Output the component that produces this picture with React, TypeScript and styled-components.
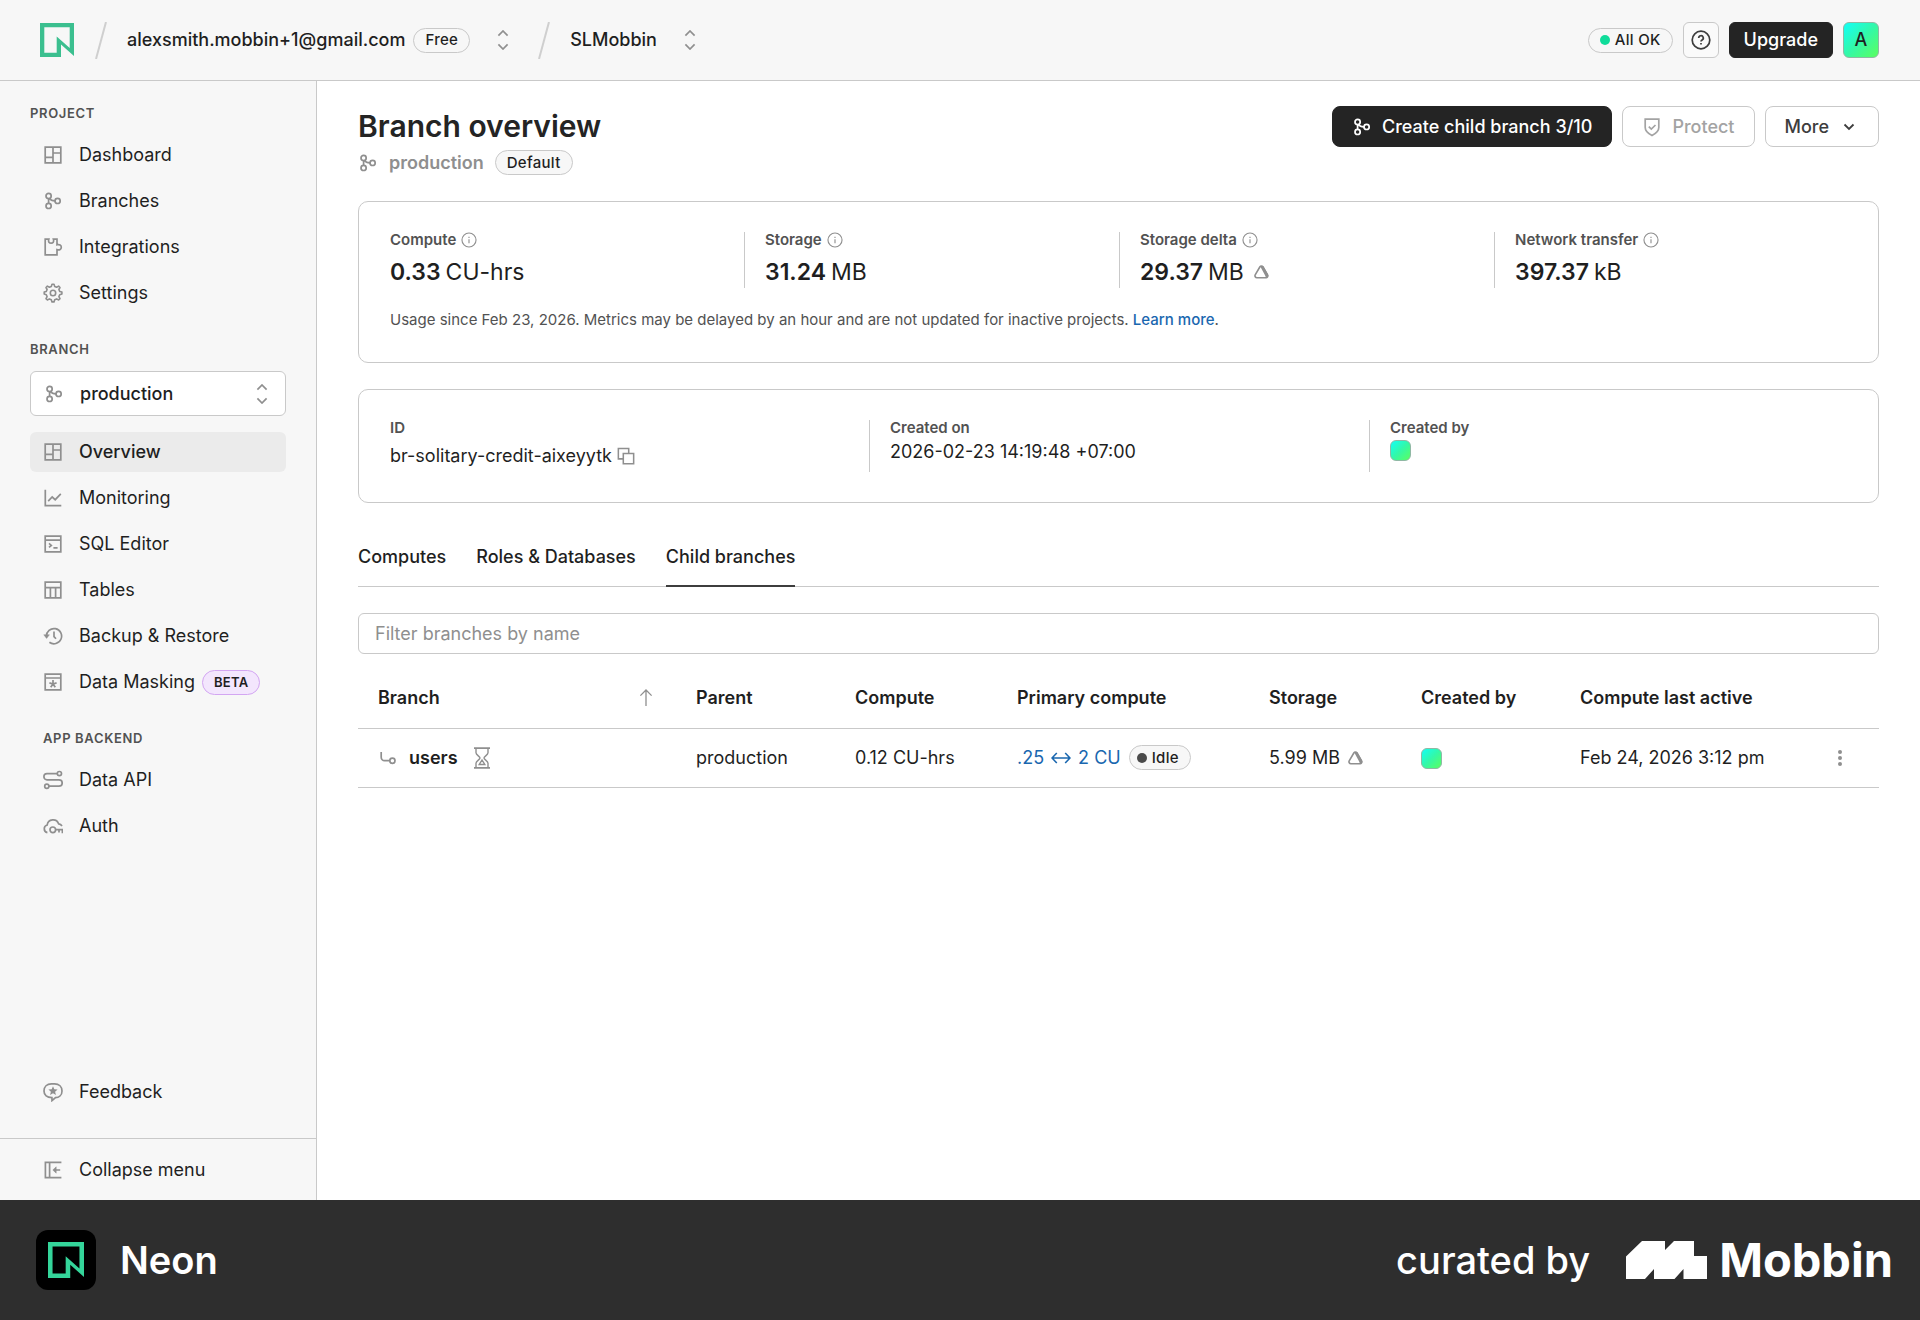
import React from "react";
import styled, { createGlobalStyle, css } from "styled-components";

const c = {
  ink: "#1f1f1f",
  strong: "#242424",
  sub: "#525252",
  muted: "#8f8f8f",
  line: "#c9c9c9",
  panel: "#f7f7f7",
  active: "#ebebeb",
  link: "#1a67af",
};

const Global = createGlobalStyle`
  *, *::before, *::after { box-sizing: border-box; }
  body { margin: 0; background: #fff; }
  body, button, input, select {
    font-family: Inter, "Liberation Sans", sans-serif;
    font-size: 18px;
    line-height: 24px;
    color: ${c.ink};
  }
  button, select { cursor: pointer; }
  strong { font-weight: 600; }
  h1, h2, p, dl, dt, dd { margin: 0; padding: 0; }
`;

/* ---------- icons ---------- */

type IconProps = { size?: number; width?: number; children?: React.ReactNode };

const Svg = ({ size = 20, width = 1.7, children }: IconProps) => (
  <svg
    width={size}
    height={size}
    viewBox="0 0 20 20"
    fill="none"
    stroke="currentColor"
    strokeWidth={width}
    aria-hidden="true"
  >
    {children}
  </svg>
);

const DashboardIcon = () => (
  <Svg>
    <path d="M2.2 2.2h15.6v15.6H2.2zM10 2.2v15.6M10 8h7.8M2.2 12.4H10" />
  </Svg>
);
const BranchIcon = () => (
  <Svg>
    <circle cx="5.6" cy="4.9" r="2.6" />
    <circle cx="5.6" cy="14.9" r="2.6" />
    <circle cx="14.6" cy="9.9" r="2.6" />
    <path d="M5.6 7.5v4.8M6.6 7.4c.9 1.8 2.6 2.5 5.4 2.5" />
  </Svg>
);
const PuzzleIcon = () => (
  <Svg>
    <path d="M2.2 2.2h3.6c-.9 2.6.5 4 2.300 4s3.200-1.400 2.300-4h3.600v5.600c2.600-.8 4.300.4 4.300 2.400s-1.700 3.200-4.300 2.400v5.200H2.200z" />
  </Svg>
);
const GearIcon = () => (
  <Svg width={1.6}>
    <circle cx="10" cy="10" r="2.7" />
    <path
      strokeLinejoin="round"
      d="M8.300 3.400 9 1.200h2l.7 2.200 1.900.8 2-1.100 1.400 1.400-1.100 2 .8 1.900 2.200.6v2l-2.200.7-.8 1.900 1.100 2-1.400 1.400-2-1.100-1.900.8-.7 2.200H9l-.7-2.200-1.900-.8-2 1.100L3 15.600l1.100-2-.8-1.900L1.200 11V9l2.100-.6.8-1.900-1.100-2 1.400-1.400 2 1.100z"
    />
  </Svg>
);
const ChartIcon = () => (
  <Svg>
    <path d="M2.300 1.700v16h16M5.200 13.200l4-4.200 3 2.700 5.600-5.800" />
  </Svg>
);
const SqlIcon = () => (
  <Svg>
    <path d="M2.200 2.200h15.600v15.600H2.200zM2.200 6.200h15.600M6 9.400l2.300 2L6 13.400M10.400 13.800h4.200" />
  </Svg>
);
const TablesIcon = () => (
  <Svg>
    <path d="M2.200 2.200h15.600v15.600H2.200zM2.200 7.600h15.600M7.400 7.600v10.200M12.600 7.600v10.200" />
  </Svg>
);
const RestoreIcon = () => (
  <Svg>
    <path d="M3.400 10.400A7.600 7.600 0 1 1 6.400 16.200M11 5.400v5.200l2 2.200" />
    <path d="M.8 8.800h5.600l-2.800 3.600z" fill="currentColor" strokeWidth="0.5" />
  </Svg>
);
const MaskIcon = () => (
  <Svg>
    <path d="M2.200 2.200h15.600v15.600H2.200zM2.200 6h15.600" />
    <path d="M10 8v4M10 12l-3.600-1.100M10 12l3.600-1.100M10 12l-2.300 3.200M10 12l2.300 3.200" />
  </Svg>
);
const ApiIcon = () => (
  <Svg>
    <circle cx="16.400" cy="3.600" r="2.100" />
    <circle cx="3.800" cy="16.200" r="2.100" />
    <path d="M14.300 3.600H4A3.100 3.100 0 0 0 4 9.800h12a3.100 3.100 0 0 1 0 6.400H5.900" />
  </Svg>
);
const AuthIcon = () => (
  <Svg>
    <path d="M4.400 16.600A3.900 3.900 0 0 1 4.200 9a5.900 5.900 0 0 1 11.400-1.200A4.600 4.600 0 0 1 19 10" />
    <circle cx="9.800" cy="13.800" r="2.800" />
    <path d="M12.600 13.600h6.800v3.600M16 13.600v3" />
  </Svg>
);
const FeedbackIcon = () => (
  <Svg>
    <path d="M8.900 15.600C4 15.600 1 13.400 1 9s3-7.100 7.400-7.100h3.200C16 1.900 19 4.600 19 9s-3.200 6.600-6.500 6.600L9 18.600z" />
    <path
      d="M10 4.200l1.300 3 3.300.3-2.500 2.200.8 3.200L10 11.200l-2.900 1.700.8-3.200-2.500-2.200 3.300-.3z"
      fill="currentColor"
      stroke="none"
    />
  </Svg>
);
const CollapseIcon = () => (
  <Svg>
    <path d="M18.400 2.400H2.400v15.200h16M6.600 2.400v15.200M17.200 10H11" />
    <path d="M13.200 6.800L9.800 10l3.400 3.200z" fill="currentColor" strokeWidth="0.5" />
  </Svg>
);
const ChevronsIcon = () => (
  <Svg width={1.7}>
    <path d="M5.400 5.600 10 1l4.600 4.600M5.400 14.400 10 19l4.600-4.600" />
  </Svg>
);
const ChevronDownIcon = () => (
  <Svg width={1.8}>
    <path d="M5.500 7.500 10 12l4.500-4.500" />
  </Svg>
);
const HelpIcon = () => (
  <Svg width={1.7}>
    <circle cx="10" cy="10" r="8.800" />
    <path d="M7.700 8a2.300 2.300 0 1 1 3.400 2c-.8.500-1.100.8-1.100 1.500M10 12.900v1.500" />
  </Svg>
);
const ShieldIcon = () => (
  <Svg width={1.7}>
    <path d="M3.200 2.200h13.600v8.400c0 4-2.800 6-6.800 8-4-2-6.800-4-6.800-8z" />
    <path d="M6.800 9.600l2.500 2.400 4.200-4" />
  </Svg>
);
const InfoIcon = () => (
  <Svg size={16} width={1.4}>
    <circle cx="10" cy="10" r="8.800" />
    <path d="M10 9v5.200M10 5.800v1.600" />
  </Svg>
);
const DeltaIcon = () => (
  <svg width="15" height="14" viewBox="0 0 15 14" fill="none" stroke="currentColor" aria-hidden="true">
    <path
      d="M5.800 2 1.200 9.900a1.900 1.900 0 0 0 1.700 2.800h9a1.900 1.900 0 0 0 1.700-2.800L9 2a1.900 1.900 0 0 0-3.200 0z"
      strokeWidth="1.600"
    />
    <path d="M8 1.600 12.600 10c.4.900 0 1.600-.8 2" strokeWidth="3" />
  </svg>
);
const CopyIcon = () => (
  <Svg size={18} width={1.7}>
    <path d="M7 7.200h11.500v11.300H7zM7 13.200H1.500V1.700H13v5.500" />
  </Svg>
);
const SortIcon = () => (
  <Svg width={1.3}>
    <path d="M10 18V2.200M4.400 7.600 10 2l5.600 5.600" />
  </Svg>
);
const ChildIcon = () => (
  <Svg>
    <path d="M3.200 4v5.200a3.400 3.400 0 0 0 3.400 3.400H12" />
    <circle cx="14.400" cy="12.800" r="2.600" />
  </Svg>
);
const HourglassIcon = () => (
  <svg width="16" height="22" viewBox="0 0 16 22" fill="none" stroke="currentColor" strokeWidth="1.400" aria-hidden="true">
    <path d="M0 1.200h16M0 20.800h16" strokeWidth="1.800" />
    <path d="M2 1.200v4.600C2 8 6 9.500 6 11s-4 3-4 5.200v4.600M14 1.200v4.600C14 8 10 9.500 10 11s4 3 4 5.200v4.600" />
    <path d="M8 13l-2.800 4.500h5.600z" />
  </svg>
);
const ArrowsIcon = () => (
  <svg width="20" height="12" viewBox="0 0 20 12" fill="none" stroke="currentColor" strokeWidth="1.600" aria-hidden="true">
    <path d="M1 6h18M5.800 1 1 6l4.800 5M14.200 1 19 6l-4.800 5" />
  </svg>
);
const KebabIcon = () => (
  <svg width="4" height="18" viewBox="0 0 4 18" fill="currentColor" aria-hidden="true">
    <circle cx="2" cy="3" r="2" />
    <circle cx="2" cy="9" r="2" />
    <circle cx="2" cy="15" r="2" />
  </svg>
);
const NeonMark = ({ size, color }: { size: number; color: string }) => (
  <svg width={size} height={size} viewBox="0 0 34 34" fill={color} fillRule="evenodd" aria-hidden="true">
    <path d="M0 0h34v33L21 21.500V34H0zM4.300 4.300v25.400H16.700V13.500L29.700 25V4.300z" />
  </svg>
);
const Slash = () => (
  <svg width="12" height="37" viewBox="0 0 12 37" stroke="#cfcfcf" strokeWidth="2" aria-hidden="true">
    <path d="M1 37 11 0" />
  </svg>
);
const MobbinMark = () => (
  <svg width="81" height="38" viewBox="0 0 81 38" fill="#fff" aria-hidden="true">
    <path d="M0 38V15.500L16 0h23v9l9-9h20v15h13v23H57.500v-10L48.500 38H28v-10L19 38z" />
  </svg>
);

/* ---------- layout ---------- */

const Page = styled.div`
  display: flex;
  flex-direction: column;
  min-height: 100vh;
`;

const TopBar = styled.header`
  display: flex;
  align-items: center;
  justify-content: space-between;
  height: 81px;
  padding: 0 41px 0 40px;
  background: ${c.panel};
  border-bottom: 1px solid ${c.line};
`;

const Crumbs = styled.nav`
  display: flex;
  align-items: center;
`;

const Home = styled.a`
  display: flex;
  margin-right: 21px;
`;

const CrumbButton = styled.button<{ $end?: number }>`
  display: flex;
  align-items: center;
  gap: 8px;
  margin: 0 ${(p) => p.$end ?? 0}px 0 20px;
  padding: 0;
  border: 0;
  background: none;
  font-weight: 500;
`;

const Chevrons = styled.span`
  display: flex;
  margin-left: 15px;
  color: ${c.muted};
`;

const Pill = styled.span<{ $beta?: boolean; $dotted?: boolean }>`
  display: inline-flex;
  align-items: center;
  gap: 5px;
  height: 25px;
  padding: 0 11px 0 ${(p) => (p.$dotted ? 7 : 11)}px;
  border: 1px solid ${c.line};
  border-radius: 13px;
  background: #f7f7f7;
  font-size: 15px;
  line-height: 20px;
  font-weight: 500;
  letter-spacing: 0.02em;
  color: ${c.ink};
  ${(p) =>
    p.$beta &&
    css`
      border-color: #d3a6f2;
      background: #f3e6fd;
      font-size: 13px;
      font-weight: 600;
    `}
`;

const Dot = styled.span<{ $color: string }>`
  width: 10px;
  height: 10px;
  border-radius: 50%;
  background: ${(p) => p.$color};
`;

const TopActions = styled.div`
  display: flex;
  align-items: center;
  gap: 10px;
`;

const Button = styled.button<{ $kind?: "dark" | "plain"; $small?: boolean }>`
  display: flex;
  align-items: center;
  gap: 10px;
  height: ${(p) => (p.$small ? 36 : 41)}px;
  padding: 0 ${(p) => (p.$small ? 14 : 19)}px;
  border: 1px solid ${(p) => (p.$kind === "dark" ? c.strong : c.line)};
  border-radius: ${(p) => (p.$small ? 6 : 8)}px;
  background: ${(p) => (p.$kind === "dark" ? c.strong : "#fff")};
  color: ${(p) => (p.$kind === "dark" ? "#fff" : "#3d3d3d")};
  font-weight: 500;
  white-space: nowrap;
  &:disabled {
    color: #a3a3a3;
    cursor: default;
  }
`;

const HelpButton = styled.button`
  display: flex;
  align-items: center;
  justify-content: center;
  width: 36px;
  height: 36px;
  padding: 0;
  border: 1px solid ${c.line};
  border-radius: 6px;
  background: #fafafa;
  color: #3d3d3d;
`;

const Avatar = styled.span<{ $size: number }>`
  display: inline-flex;
  align-items: center;
  justify-content: center;
  width: ${(p) => p.$size}px;
  height: ${(p) => p.$size}px;
  border: 1px solid #8fb8a4;
  border-radius: 6px;
  background: linear-gradient(135deg, #12fff7 0%, #33f8a8 50%, #5bff5f 100%);
  font-weight: 500;
  vertical-align: middle;
`;

const Body = styled.div`
  display: grid;
  grid-template-columns: 317px minmax(0, 1fr);
  flex: 1;
`;

const Sidebar = styled.aside`
  display: flex;
  flex-direction: column;
  background: ${c.panel};
  border-right: 1px solid ${c.line};
`;

const Section = styled.section`
  display: flex;
  flex-direction: column;
  gap: 6px;
  padding: 0 30px;
`;

const SectionTitle = styled.h2<{ $top: number; $inset?: boolean }>`
  margin: ${(p) => p.$top}px 0 8px ${(p) => (p.$inset ? 13 : 0)}px;
  font-size: 13px;
  line-height: 16px;
  font-weight: 600;
  letter-spacing: 0.05em;
  color: ${c.sub};
`;

const NavItem = styled.a<{ $active?: boolean }>`
  display: flex;
  align-items: center;
  height: 40px;
  padding-left: 13px;
  border-radius: 6px;
  background: ${(p) => (p.$active ? c.active : "none")};
  font-weight: ${(p) => (p.$active ? 500 : 400)};
  color: ${c.ink};
  text-decoration: none;
  white-space: nowrap;
  > svg {
    margin-right: 16px;
    color: ${c.muted};
  }
  > ${Pill} {
    margin-left: 7px;
  }
`;

const BranchSelect = styled.label`
  display: flex;
  align-items: center;
  height: 45px;
  margin-bottom: 10px;
  padding: 0 13px;
  border: 1px solid ${c.line};
  border-radius: 6px;
  background: #fff;
  color: ${c.muted};
  select {
    flex: 1;
    margin-left: 16px;
    padding: 0;
    border: 0;
    appearance: none;
    background: none;
    font-weight: 500;
  }
`;

const SidebarFoot = styled.div`
  margin-top: auto;
`;

const Collapse = styled.button`
  display: flex;
  align-items: center;
  gap: 16px;
  width: 100%;
  height: 62px;
  margin-top: 26px;
  padding: 0 43px;
  border: 0;
  border-top: 1px solid ${c.line};
  background: none;
  svg {
    color: ${c.muted};
  }
`;

const Main = styled.main`
  padding: 25px 41px;
`;

const Heading = styled.div`
  display: flex;
  justify-content: space-between;
  align-items: flex-start;
  margin-bottom: 26px;
`;

const Title = styled.h1`
  font-size: 30px;
  line-height: 41px;
  font-weight: 600;
  color: ${c.strong};
`;

const Subtitle = styled.div`
  display: flex;
  align-items: center;
  gap: 11px;
  margin-top: 3px;
  color: ${c.muted};
  font-weight: 600;
`;

const Card = styled.section`
  margin-bottom: 26px;
  padding: 30px 31px;
  border: 1px solid ${c.line};
  border-radius: 10px;
`;

const Stats = styled.dl`
  display: flex;
  gap: 22px;
`;

const Stat = styled.div`
  box-sizing: content-box;
  flex: 1 1 0;
  min-width: 0;
  & + & {
    padding-left: 20px;
    border-left: 1px solid ${c.line};
  }
`;

const StatLabel = styled.dt`
  display: flex;
  align-items: center;
  gap: 5px;
  font-size: 15px;
  line-height: 16px;
  font-weight: 600;
  color: ${c.sub};
  svg {
    color: ${c.muted};
  }
`;

const Metric = styled.dd`
  display: flex;
  align-items: center;
  gap: 5px;
  margin-top: 8px;
  font-size: 23px;
  line-height: 32px;
  svg {
    margin-left: 5px;
    color: ${c.muted};
  }
`;

const Detail = styled.dd`
  display: flex;
  align-items: center;
  gap: 5px;
  margin-top: 4px;
`;

const CopyButton = styled.button`
  display: flex;
  align-items: center;
  height: 32px;
  padding: 0;
  border: 0;
  background: none;
  color: ${c.muted};
`;

const Note = styled.p`
  margin-top: 20px;
  font-size: 15px;
  line-height: 24px;
  color: ${c.sub};
`;

const Link = styled.a`
  color: ${c.link};
  font-weight: 500;
  text-decoration: none;
`;

const Tabs = styled.div`
  display: flex;
  gap: 30px;
  margin-top: 42px;
  border-bottom: 1px solid ${c.line};
`;

const Tab = styled.button<{ $active?: boolean }>`
  margin-bottom: -1px;
  padding: 0 0 16px;
  border: 0;
  border-bottom: 2px solid ${(p) => (p.$active ? "#3d3d3d" : "transparent")};
  background: none;
  font-weight: 500;
`;

const Filter = styled.input`
  display: block;
  width: 100%;
  height: 41px;
  margin: 26px 0 15px;
  padding: 0 16px;
  border: 1px solid ${c.line};
  border-radius: 6px;
  outline: 0;
  &::placeholder {
    color: ${c.muted};
    opacity: 1;
  }
`;

const Table = styled.table`
  width: 100%;
  table-layout: fixed;
  border-collapse: collapse;
  text-align: left;
  white-space: nowrap;
  th,
  td {
    height: 59px;
    padding: 0 0 0 20px;
    border-bottom: 1px solid ${c.line};
  }
  th {
    font-weight: 600;
  }
`;

const CellRow = styled.div`
  display: flex;
  align-items: center;
  gap: 8px;
  > svg {
    color: ${c.muted};
  }
`;

const SortHead = styled(CellRow)`
  justify-content: space-between;
  padding-right: 20px;
`;

const BranchName = styled.strong`
  margin: 0 8px 0 3px;
`;

const ComputeLink = styled.a`
  display: flex;
  align-items: center;
  gap: 7px;
  color: ${c.link};
  text-decoration: none;
`;

const RowMenu = styled.button`
  display: block;
  padding: 0;
  border: 0;
  background: none;
  color: ${c.muted};
  svg {
    display: block;
  }
`;

const Banner = styled.footer`
  display: flex;
  align-items: center;
  justify-content: space-between;
  height: 120px;
  padding: 0 27px 0 36px;
  background: #2e2e2e;
  color: #fff;
`;

const Brand = styled.div`
  display: flex;
  align-items: center;
  gap: 24px;
  font-size: 38px;
  line-height: 48px;
  font-weight: 600;
`;

const AppTile = styled.span`
  display: flex;
  align-items: center;
  justify-content: center;
  width: 60px;
  height: 60px;
  border-radius: 12px;
  background: #000;
`;

const Curated = styled(Brand)`
  gap: 36px;
  font-weight: 500;
`;

const Wordmark = styled.span`
  display: flex;
  align-items: center;
  gap: 12px;
  font-size: 47px;
  font-weight: 700;
`;

/* ---------- data ---------- */

type Nav = { label: string; icon: React.ReactNode; active?: boolean; beta?: boolean };

const projectNav: Nav[] = [
  { label: "Dashboard", icon: <DashboardIcon /> },
  { label: "Branches", icon: <BranchIcon /> },
  { label: "Integrations", icon: <PuzzleIcon /> },
  { label: "Settings", icon: <GearIcon /> },
];
const branchNav: Nav[] = [
  { label: "Overview", icon: <DashboardIcon />, active: true },
  { label: "Monitoring", icon: <ChartIcon /> },
  { label: "SQL Editor", icon: <SqlIcon /> },
  { label: "Tables", icon: <TablesIcon /> },
  { label: "Backup & Restore", icon: <RestoreIcon /> },
  { label: "Data Masking", icon: <MaskIcon />, beta: true },
];
const backendNav: Nav[] = [
  { label: "Data API", icon: <ApiIcon /> },
  { label: "Auth", icon: <AuthIcon /> },
];
const metrics = [
  { label: "Compute", value: "0.33", unit: "CU-hrs" },
  { label: "Storage", value: "31.24", unit: "MB" },
  { label: "Storage delta", value: "29.37", unit: "MB", delta: true },
  { label: "Network transfer", value: "397.37", unit: "kB" },
];
const columnWidths = [318, 159, 162, 252, 152, 159, undefined, 61];

const NavList = ({ items }: { items: Nav[] }) => (
  <>
    {items.map((it) => (
      <NavItem key={it.label} href="#" $active={it.active}>
        {it.icon}
        {it.label}
        {it.beta && <Pill $beta>BETA</Pill>}
      </NavItem>
    ))}
  </>
);

export default function App() {
  return (
    <Page>
      <Global />
      <TopBar>
        <Crumbs aria-label="Breadcrumb">
          <Home href="#" aria-label="Neon home">
            <NeonMark size={34} color="#3bbf8f" />
          </Home>
          <Slash />
          <CrumbButton $end={25}>
            alexsmith.mobbin+1@gmail.com
            <Pill>Free</Pill>
            <Chevrons>
              <ChevronsIcon />
            </Chevrons>
          </CrumbButton>
          <Slash />
          <CrumbButton>
            SLMobbin
            <Chevrons>
              <ChevronsIcon />
            </Chevrons>
          </CrumbButton>
        </Crumbs>
        <TopActions>
          <Pill>
            <Dot $color="#0fdc9a" />
            All OK
          </Pill>
          <HelpButton aria-label="Help">
            <HelpIcon />
          </HelpButton>
          <Button $kind="dark" $small>
            Upgrade
          </Button>
          <Avatar $size={36}>A</Avatar>
        </TopActions>
      </TopBar>

      <Body>
        <Sidebar>
          <Section>
            <SectionTitle $top={24}>PROJECT</SectionTitle>
            <NavList items={projectNav} />
          </Section>
          <Section>
            <SectionTitle $top={28}>BRANCH</SectionTitle>
            <BranchSelect>
              <BranchIcon />
              <select aria-label="Branch" defaultValue="production">
                <option value="production">production</option>
                <option value="users">users</option>
              </select>
              <ChevronsIcon />
            </BranchSelect>
            <NavList items={branchNav} />
          </Section>
          <Section>
            <SectionTitle $top={28} $inset>
              APP BACKEND
            </SectionTitle>
            <NavList items={backendNav} />
          </Section>
          <SidebarFoot>
            <Section>
              <NavItem href="#">
                <FeedbackIcon />
                Feedback
              </NavItem>
            </Section>
            <Collapse>
              <CollapseIcon />
              Collapse menu
            </Collapse>
          </SidebarFoot>
        </Sidebar>

        <Main>
          <Heading>
            <div>
              <Title>Branch overview</Title>
              <Subtitle>
                <BranchIcon />
                production
                <Pill>Default</Pill>
              </Subtitle>
            </div>
            <TopActions>
              <Button $kind="dark">
                <BranchIcon />
                Create child branch 3/10
              </Button>
              <Button disabled>
                <ShieldIcon />
                Protect
              </Button>
              <Button>
                More
                <ChevronDownIcon />
              </Button>
            </TopActions>
          </Heading>

          <Card>
            <Stats>
              {metrics.map((m) => (
                <Stat key={m.label}>
                  <StatLabel>
                    {m.label}
                    <InfoIcon />
                  </StatLabel>
                  <Metric>
                    <strong>{m.value}</strong>
                    {m.unit}
                    {m.delta && <DeltaIcon />}
                  </Metric>
                </Stat>
              ))}
            </Stats>
            <Note>
              Usage since Feb 23, 2026. Metrics may be delayed by an hour and are not updated for inactive
              projects. <Link href="#">Learn more</Link>.
            </Note>
          </Card>

          <Card>
            <Stats>
              <Stat>
                <StatLabel>ID</StatLabel>
                <Detail>
                  br-solitary-credit-aixeyytk
                  <CopyButton aria-label="Copy branch ID">
                    <CopyIcon />
                  </CopyButton>
                </Detail>
              </Stat>
              <Stat>
                <StatLabel>Created on</StatLabel>
                <Detail>2026-02-23 14:19:48 +07:00</Detail>
              </Stat>
              <Stat>
                <StatLabel>Created by</StatLabel>
                <Detail>
                  <Avatar $size={21} />
                </Detail>
              </Stat>
            </Stats>
          </Card>

          <Tabs role="tablist">
            <Tab role="tab">Computes</Tab>
            <Tab role="tab">Roles &amp; Databases</Tab>
            <Tab role="tab" aria-selected $active>
              Child branches
            </Tab>
          </Tabs>

          <Filter type="text" aria-label="Filter branches by name" placeholder="Filter branches by name" />

          <Table>
            <colgroup>
              {columnWidths.map((w, i) => (
                <col key={i} width={w} />
              ))}
            </colgroup>
            <thead>
              <tr>
                <th scope="col">
                  <SortHead>
                    Branch
                    <SortIcon />
                  </SortHead>
                </th>
                <th scope="col">Parent</th>
                <th scope="col">Compute</th>
                <th scope="col">Primary compute</th>
                <th scope="col">Storage</th>
                <th scope="col">Created by</th>
                <th scope="col">Compute last active</th>
                <th scope="col" aria-label="Actions" />
              </tr>
            </thead>
            <tbody>
              <tr>
                <td>
                  <CellRow>
                    <ChildIcon />
                    <BranchName>users</BranchName>
                    <HourglassIcon />
                  </CellRow>
                </td>
                <td>production</td>
                <td>0.12 CU-hrs</td>
                <td>
                  <CellRow>
                    <ComputeLink href="#">
                      .25 <ArrowsIcon /> 2 CU
                    </ComputeLink>
                    <Pill $dotted>
                      <Dot $color="#4a4a4a" />
                      Idle
                    </Pill>
                  </CellRow>
                </td>
                <td>
                  <CellRow>
                    5.99 MB
                    <DeltaIcon />
                  </CellRow>
                </td>
                <td>
                  <Avatar $size={21} />
                </td>
                <td>Feb 24, 2026 3:12 pm</td>
                <td>
                  <RowMenu aria-label="Row actions">
                    <KebabIcon />
                  </RowMenu>
                </td>
              </tr>
            </tbody>
          </Table>
        </Main>
      </Body>

      <Banner>
        <Brand>
          <AppTile>
            <NeonMark size={36} color="#34d59a" />
          </AppTile>
          Neon
        </Brand>
        <Curated>
          curated by
          <Wordmark>
            <MobbinMark />
            Mobbin
          </Wordmark>
        </Curated>
      </Banner>
    </Page>
  );
}
